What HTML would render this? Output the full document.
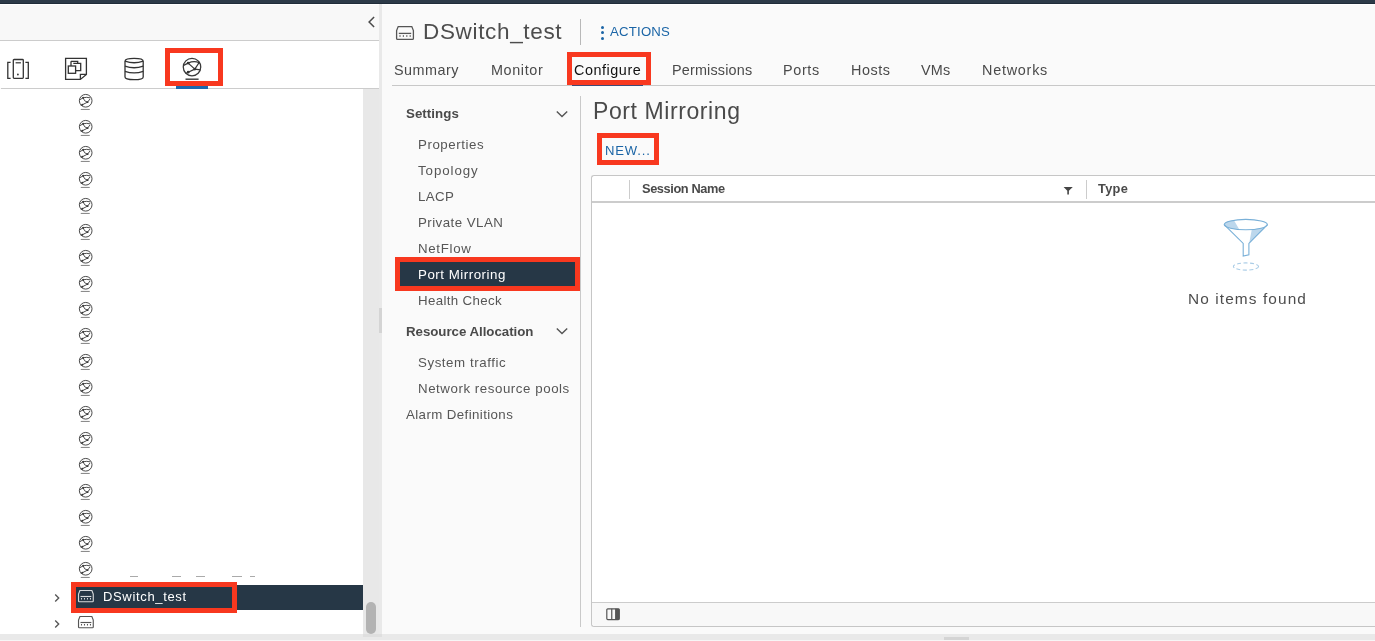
<!DOCTYPE html>
<html><head><meta charset="utf-8"><style>
*{margin:0;padding:0;box-sizing:content-box}
html,body{width:1375px;height:641px;overflow:hidden;background:#fafafa;font-family:"Liberation Sans",sans-serif}
.a{position:absolute}
.t{position:absolute;white-space:nowrap;will-change:transform}
.ic{position:absolute;overflow:visible}
.rb{position:absolute}
</style></head><body>
<svg width="0" height="0" style="position:absolute">
 <defs>
  <symbol id="globe" viewBox="0 0 24 24" overflow="visible">
   <g fill="none" stroke="#383838" stroke-width="1.25">
   <circle cx="12" cy="12.1" r="8.75"/>
   <path d="M3.6 10.4 L8.15 8.1 Q13.7 5.6 19.1 7.6 L14.85 14.1 L8.15 8.1 M14.85 14.1 L20.5 14.8 M14.85 14.1 L8.15 17.2 L5.8 18.5"/>
   <path d="M5.5 24.2 H18.6" stroke-width="1.4"/>
   </g>
   <g fill="#333"><circle cx="8.15" cy="8.1" r="1.35"/><circle cx="14.85" cy="14.1" r="1.45"/><circle cx="8.15" cy="17.2" r="1.35"/><circle cx="19.1" cy="7.6" r="1.1"/></g>
  </symbol>
  <symbol id="globeS" viewBox="0 0 24 24" overflow="visible">
   <g fill="none" stroke="#404040" stroke-width="1.3">
   <circle cx="12" cy="12.1" r="8.75"/>
   <path d="M3.6 10.9 L8.4 8 Q13.4 6.6 18.6 8.2 M8.4 8 Q9.6 13.2 14.6 14 L18 9.6 M14.6 14 L7.4 17.6 L5.2 18.6"/>
   <path d="M5.2 24.1 H17.6" stroke="#8c8c8c" stroke-width="1.5"/>
   </g>
   <g fill="#383838"><circle cx="8.4" cy="8" r="1.3"/><circle cx="14.6" cy="14" r="1.3"/><circle cx="7.4" cy="17.6" r="1.4"/></g>
  </symbol>
  <g id="sw" fill="none" stroke-width="1.3">
   <path d="M2.2 0.6 H15.8 L17.4 4.6 V12.4 Q17.4 13.4 16.4 13.4 H1.6 Q0.6 13.4 0.6 12.4 V4.6 Z"/>
   <path d="M2.8 7.4 H15.2"/>
   <path d="M4 9.2 V10.8 M7.4 9.2 V10.8 M10.8 9.2 V10.8 M14.2 9.2 V10.8" stroke-width="1.2"/>
  </g>
 </defs>
</svg>
<!-- top bar -->
<div class="a" style="left:0;top:0;width:1375px;height:4px;background:#2d3a48"></div>
<div class="a" style="left:0;top:3px;width:1375px;height:1px;background:#202c39"></div>
<div class="a" style="left:0;top:4px;width:1375px;height:1px;background:#ffffff"></div>
<!-- left panel -->
<div class="a" style="left:0;top:5px;width:379px;height:35px;background:#f8f8f8"></div>
<div class="a" style="left:0;top:40px;width:379px;height:1px;background:#cccccc"></div>
<div class="a" style="left:0;top:41px;width:379px;height:47px;background:#ffffff"></div>
<div class="a" style="left:1px;top:88px;width:378px;height:1px;background:#cccccc"></div>
<div class="a" style="left:0;top:89px;width:363px;height:545px;background:#ffffff"></div>
<div class="a" style="left:363px;top:89px;width:16px;height:545px;background:#e8e8e8"></div>
<div class="a" style="left:366px;top:602px;width:10px;height:32px;background:#b3b3b3;border-radius:5px"></div>
<div class="a" style="left:379px;top:4px;width:3px;height:630px;background:#e9e9e9"></div>
<!-- collapse chevron -->
<svg class="ic" style="left:366px;top:15px" width="10" height="14" viewBox="0 0 10 14"><path d="M8.1 2 L3.1 7 L8.1 12" fill="none" stroke="#4a4a4a" stroke-width="1.5"/></svg>
<!-- tab icons -->
<svg class="ic" style="left:6px;top:58px" width="24" height="22" viewBox="0 0 24 22" fill="none" stroke="#333" stroke-width="1.3">
 <path d="M4.6 4.3 H1.8 V20.3 H4.6 M19.4 4.3 H22.3 V20.3 H19.4"/>
 <rect x="7.3" y="1.5" width="10" height="18.8" rx="0.8"/>
 <path d="M9.6 4.8 H14.9" stroke-width="1.2"/>
 <circle cx="11.9" cy="16.5" r="0.9" fill="#333" stroke="none"/>
</svg>
<svg class="ic" style="left:64px;top:57px" width="24" height="24" viewBox="0 0 24 24" fill="none" stroke="#333" stroke-width="1.3">
 <path d="M1.6 1.4 H22.4 V17.4 L16.4 22.4 H1.6 Z M22.4 17.4 H16.4 V22.4"/>
 <rect x="4.3" y="9" width="7.3" height="7.3"/>
 <path d="M7 4.3 H13.7 V6.3 M7 4.3 V9"/>
 <path d="M9.3 6.3 H16.7 V13.7 H11.6"/>
</svg>
<svg class="ic" style="left:123px;top:57px" width="22" height="24" viewBox="0 0 22 24" fill="none" stroke="#333" stroke-width="1.3">
 <path d="M2 4.2 Q2 1.4 11.1 1.4 Q20.2 1.4 20.2 4.2 V19.9 Q20.2 22.6 11.1 22.6 Q2 22.6 2 19.9 Z"/>
 <path d="M2 4.2 Q11.1 7.3 20.2 4.2 M2 9.2 Q11.1 12.3 20.2 9.2 M2 14.3 Q11.1 17.4 20.2 14.3"/>
</svg>
<svg class="ic" style="left:179.9px;top:55.4px" width="24" height="24" viewBox="0 0 24 24"><use href="#globe"/></svg>
<div class="a" style="left:176px;top:86px;width:32px;height:3px;background:#1a68ae"></div>
<div class='rb' style='left:165px;top:48px;width:48px;height:28px;border:5px solid #f8381f'></div>
<!-- tree -->
<svg class='ic' style='left:77.3px;top:92.41px' width='17.38' height='17.38' viewBox='0 0 24 24'><use href='#globeS'/></svg>
<svg class='ic' style='left:77.3px;top:118.41px' width='17.38' height='17.38' viewBox='0 0 24 24'><use href='#globeS'/></svg>
<svg class='ic' style='left:77.3px;top:144.41px' width='17.38' height='17.38' viewBox='0 0 24 24'><use href='#globeS'/></svg>
<svg class='ic' style='left:77.3px;top:170.41px' width='17.38' height='17.38' viewBox='0 0 24 24'><use href='#globeS'/></svg>
<svg class='ic' style='left:77.3px;top:196.41px' width='17.38' height='17.38' viewBox='0 0 24 24'><use href='#globeS'/></svg>
<svg class='ic' style='left:77.3px;top:222.41px' width='17.38' height='17.38' viewBox='0 0 24 24'><use href='#globeS'/></svg>
<svg class='ic' style='left:77.3px;top:248.41px' width='17.38' height='17.38' viewBox='0 0 24 24'><use href='#globeS'/></svg>
<svg class='ic' style='left:77.3px;top:274.41px' width='17.38' height='17.38' viewBox='0 0 24 24'><use href='#globeS'/></svg>
<svg class='ic' style='left:77.3px;top:300.41px' width='17.38' height='17.38' viewBox='0 0 24 24'><use href='#globeS'/></svg>
<svg class='ic' style='left:77.3px;top:326.41px' width='17.38' height='17.38' viewBox='0 0 24 24'><use href='#globeS'/></svg>
<svg class='ic' style='left:77.3px;top:352.41px' width='17.38' height='17.38' viewBox='0 0 24 24'><use href='#globeS'/></svg>
<svg class='ic' style='left:77.3px;top:378.41px' width='17.38' height='17.38' viewBox='0 0 24 24'><use href='#globeS'/></svg>
<svg class='ic' style='left:77.3px;top:404.41px' width='17.38' height='17.38' viewBox='0 0 24 24'><use href='#globeS'/></svg>
<svg class='ic' style='left:77.3px;top:430.41px' width='17.38' height='17.38' viewBox='0 0 24 24'><use href='#globeS'/></svg>
<svg class='ic' style='left:77.3px;top:456.41px' width='17.38' height='17.38' viewBox='0 0 24 24'><use href='#globeS'/></svg>
<svg class='ic' style='left:77.3px;top:482.41px' width='17.38' height='17.38' viewBox='0 0 24 24'><use href='#globeS'/></svg>
<svg class='ic' style='left:77.3px;top:508.41px' width='17.38' height='17.38' viewBox='0 0 24 24'><use href='#globeS'/></svg>
<svg class='ic' style='left:77.3px;top:534.41px' width='17.38' height='17.38' viewBox='0 0 24 24'><use href='#globeS'/></svg>
<svg class='ic' style='left:77.3px;top:560.41px' width='17.38' height='17.38' viewBox='0 0 24 24'><use href='#globeS'/></svg>
<div class="a" style="left:130px;top:576px;width:8px;height:1px;background:#aaa"></div>
<div class="a" style="left:172px;top:576px;width:9px;height:1px;background:#aaa"></div>
<div class="a" style="left:196px;top:576px;width:9px;height:1px;background:#aaa"></div>
<div class="a" style="left:232px;top:576px;width:10px;height:1px;background:#aaa"></div>
<div class="a" style="left:250px;top:576px;width:5px;height:1px;background:#aaa"></div>
<div class="a" style="left:71px;top:585px;width:292px;height:25px;background:#263746"></div>
<svg class="ic" style="left:53px;top:592.6px" width="8" height="10" viewBox="0 0 8 10"><path d="M2.2 1.5 L5.7 5 L2.2 8.5" fill="none" stroke="#555" stroke-width="1.35"/></svg>
<svg class="ic" style="left:77.9px;top:589.8px" width="15.8" height="12.3" viewBox="0 0 18 14"><use href="#sw" stroke="#d8dadc"/></svg>
<svg class="ic" style="left:53px;top:618.6px" width="8" height="10" viewBox="0 0 8 10"><path d="M2.2 1.5 L5.7 5 L2.2 8.5" fill="none" stroke="#555" stroke-width="1.35"/></svg>
<svg class="ic" style="left:77.9px;top:615.7px" width="15.8" height="12.3" viewBox="0 0 18 14"><use href="#sw" stroke="#555"/></svg>
<div class='rb' style='left:70.5px;top:582px;width:156px;height:21px;border:5px solid #f8381f'></div>
<!-- right header -->
<svg class="ic" style="left:395.6px;top:25.6px" width="18" height="14" viewBox="0 0 18 14"><use href="#sw" stroke="#555"/></svg>
<div class="a" style="left:580px;top:19px;width:1px;height:26px;background:#b8b8b8"></div>
<div class="a" style="left:600.5px;top:25.5px;width:3px;height:3px;border-radius:50%;background:#1b65a6"></div>
<div class="a" style="left:600.5px;top:31.3px;width:3px;height:3px;border-radius:50%;background:#1b65a6"></div>
<div class="a" style="left:600.5px;top:37.1px;width:3px;height:3px;border-radius:50%;background:#1b65a6"></div>
<div class="a" style="left:392px;top:85px;width:983px;height:1px;background:#c8c8c8"></div>
<div class="a" style="left:572px;top:85px;width:71px;height:1px;background:#3f4a78"></div>
<div class='rb' style='left:567px;top:52px;width:74px;height:23px;border:5px solid #f8381f'></div>
<!-- nav -->
<div class="a" style="left:580px;top:96px;width:1px;height:531px;background:#c9c9c9"></div>
<svg class="ic" style="left:555px;top:108.6px" width="14" height="11" viewBox="0 0 14 11"><path d="M1.8 2.4 L7 7.6 L12.2 2.4" fill="none" stroke="#555" stroke-width="1.4"/></svg>
<svg class="ic" style="left:555px;top:326.3px" width="14" height="11" viewBox="0 0 14 11"><path d="M1.8 2.4 L7 7.6 L12.2 2.4" fill="none" stroke="#555" stroke-width="1.4"/></svg>
<div class="a" style="left:395px;top:262px;width:185px;height:26px;background:#263746"></div>
<div class='rb' style='left:395px;top:257px;width:175px;height:24px;border:5px solid #f8381f'></div>
<!-- datagrid -->
<div class="a" style="left:591px;top:175px;width:784px;height:450px;background:#fff;border:1px solid #c6c6c6;border-right:none;border-radius:3px 0 0 3px"></div>
<div class="a" style="left:592px;top:201px;width:783px;height:2px;background:#cccccc"></div>
<div class="a" style="left:629px;top:180px;width:1px;height:19px;background:#cccccc"></div>
<div class="a" style="left:1086px;top:180px;width:1px;height:19px;background:#cccccc"></div>
<svg class="ic" style="left:1063px;top:186px" width="10" height="9" viewBox="0 0 10 9"><path d="M0.6 0.9 H9.8 L5.9 4.8 V8.4 H4.3 V4.8 Z" fill="#454545"/></svg>
<div class="a" style="left:592px;top:602px;width:783px;height:23px;background:#f8f8f8;border-top:1px solid #cccccc;border-radius:0 0 0 3px"></div>
<svg class="ic" style="left:605px;top:607px" width="16" height="14" viewBox="0 0 16 14" fill="none" stroke="#555" stroke-width="1.2">
 <rect x="10.7" y="1.8" width="3.6" height="10.8" fill="#555" stroke="none"/>
 <rect x="1.8" y="1.8" width="12.5" height="10.8" rx="1"/>
 <path d="M6.75 1.8 V12.6 M10.7 1.8 V12.6"/>
</svg>
<div class='rb' style='left:596.5px;top:133.4px;width:52px;height:22px;border:5px solid #f8381f'></div>
<!-- empty funnel -->
<svg class="ic" style="left:1222px;top:217px" width="48" height="56" viewBox="0 0 48 56" fill="none" stroke="#79b0d8" stroke-width="1.1">
 <path d="M2.2 7.6 A21.6 5.2 0 0 1 11.8 3.1 L17.3 12.5 A21.6 5.2 0 0 1 2.2 7.6 Z" fill="#bcd7ec" stroke="none"/>
 <path d="M29.8 12.5 L43.6 10.4 L27.2 26.6 Z" fill="#bcd7ec" stroke="none"/>
 <ellipse cx="23.8" cy="7.6" rx="21.6" ry="5.2"/>
 <path d="M2.2 7.6 L21.2 26.4 V39 L26.9 37.8 V26.4 L45.4 7.6"/>
 <ellipse cx="24" cy="49.5" rx="12.6" ry="3.6" stroke-dasharray="4 2.4" stroke="#a9cce6"/>
</svg>
<!-- bottom band -->
<div class="a" style="left:0;top:634px;width:1375px;height:6px;background:#e9e9e9"></div>
<div class="a" style="left:944px;top:637px;width:25px;height:3px;background:#d4d4d4"></div>
<div class="a" style="left:363px;top:634px;width:19px;height:3px;background:#dfdfdf"></div>
<div class="a" style="left:379px;top:308px;width:3px;height:25px;background:#d4d4d4"></div>
<div class="a" style="left:0;top:640px;width:1375px;height:1px;background:#f6f6f6"></div>
<div class='t' style='left:422.63px;top:21.00px;font-size:22.50px;line-height:22.50px;letter-spacing:0.661px;font-weight:400;color:#4d4d4d'>DSwitch_test</div>
<div class='t' style='left:609.57px;top:25.00px;font-size:13.20px;line-height:13.20px;letter-spacing:0.212px;font-weight:400;color:#1b65a6'>ACTIONS</div>
<div class='t' style='left:394.15px;top:63.00px;font-size:14.40px;line-height:14.40px;letter-spacing:0.467px;font-weight:400;color:#4a4a4a'>Summary</div>
<div class='t' style='left:491.00px;top:63.00px;font-size:14.40px;line-height:14.40px;letter-spacing:0.620px;font-weight:400;color:#4a4a4a'>Monitor</div>
<div class='t' style='left:574.38px;top:63.00px;font-size:14.40px;line-height:14.40px;letter-spacing:0.542px;font-weight:400;color:#111111'>Configure</div>
<div class='t' style='left:672.00px;top:63.00px;font-size:14.40px;line-height:14.40px;letter-spacing:0.178px;font-weight:400;color:#4a4a4a'>Permissions</div>
<div class='t' style='left:783.00px;top:63.00px;font-size:14.40px;line-height:14.40px;letter-spacing:0.655px;font-weight:400;color:#4a4a4a'>Ports</div>
<div class='t' style='left:850.50px;top:63.00px;font-size:14.40px;line-height:14.40px;letter-spacing:0.555px;font-weight:400;color:#4a4a4a'>Hosts</div>
<div class='t' style='left:921.34px;top:63.00px;font-size:14.40px;line-height:14.40px;letter-spacing:0.265px;font-weight:400;color:#4a4a4a'>VMs</div>
<div class='t' style='left:982.00px;top:63.00px;font-size:14.40px;line-height:14.40px;letter-spacing:0.759px;font-weight:400;color:#4a4a4a'>Networks</div>
<div class='t' style='left:406.16px;top:107.00px;font-size:13.30px;line-height:13.30px;letter-spacing:0.053px;font-weight:700;color:#4a4a4a'>Settings</div>
<div class='t' style='left:418.47px;top:138.00px;font-size:13.30px;line-height:13.30px;letter-spacing:0.549px;font-weight:400;color:#565656'>Properties</div>
<div class='t' style='left:418.47px;top:164.00px;font-size:13.30px;line-height:13.30px;letter-spacing:0.920px;font-weight:400;color:#565656'>Topology</div>
<div class='t' style='left:418.47px;top:190.00px;font-size:13.30px;line-height:13.30px;letter-spacing:0.343px;font-weight:400;color:#565656'>LACP</div>
<div class='t' style='left:418.47px;top:216.00px;font-size:13.30px;line-height:13.30px;letter-spacing:0.455px;font-weight:400;color:#565656'>Private VLAN</div>
<div class='t' style='left:418.47px;top:242.00px;font-size:13.30px;line-height:13.30px;letter-spacing:0.675px;font-weight:400;color:#565656'>NetFlow</div>
<div class='t' style='left:418.47px;top:268.00px;font-size:13.30px;line-height:13.30px;letter-spacing:0.526px;font-weight:400;color:#ffffff'>Port Mirroring</div>
<div class='t' style='left:418.47px;top:294.00px;font-size:13.30px;line-height:13.30px;letter-spacing:0.351px;font-weight:400;color:#565656'>Health Check</div>
<div class='t' style='left:406.16px;top:325.00px;font-size:13.30px;line-height:13.30px;letter-spacing:-0.036px;font-weight:700;color:#4a4a4a'>Resource Allocation</div>
<div class='t' style='left:418.47px;top:356.00px;font-size:13.30px;line-height:13.30px;letter-spacing:0.566px;font-weight:400;color:#565656'>System traffic</div>
<div class='t' style='left:418.47px;top:382.00px;font-size:13.30px;line-height:13.30px;letter-spacing:0.550px;font-weight:400;color:#565656'>Network resource pools</div>
<div class='t' style='left:406.16px;top:408.00px;font-size:13.30px;line-height:13.30px;letter-spacing:0.394px;font-weight:400;color:#565656'>Alarm Definitions</div>
<div class='t' style='left:593.44px;top:100.00px;font-size:23.00px;line-height:23.00px;letter-spacing:0.588px;font-weight:400;color:#4a4a4a'>Port Mirroring</div>
<div class='t' style='left:605.00px;top:144.00px;font-size:13.10px;line-height:13.10px;letter-spacing:0.816px;font-weight:400;color:#1b65a6'>NEW...</div>
<div class='t' style='left:642.04px;top:183.00px;font-size:12.80px;line-height:12.80px;letter-spacing:-0.405px;font-weight:700;color:#4a4a4a'>Session Name</div>
<div class='t' style='left:1098.39px;top:183.00px;font-size:12.80px;line-height:12.80px;letter-spacing:0.304px;font-weight:700;color:#4a4a4a'>Type</div>
<div class='t' style='left:1187.50px;top:291.00px;font-size:15.40px;line-height:15.40px;letter-spacing:1.109px;font-weight:400;color:#4d4d4d'>No items found</div>
<div class='t' style='left:102.50px;top:590.00px;font-size:13.00px;line-height:13.00px;letter-spacing:0.657px;font-weight:400;color:#ffffff'>DSwitch_test</div>
</body></html>
